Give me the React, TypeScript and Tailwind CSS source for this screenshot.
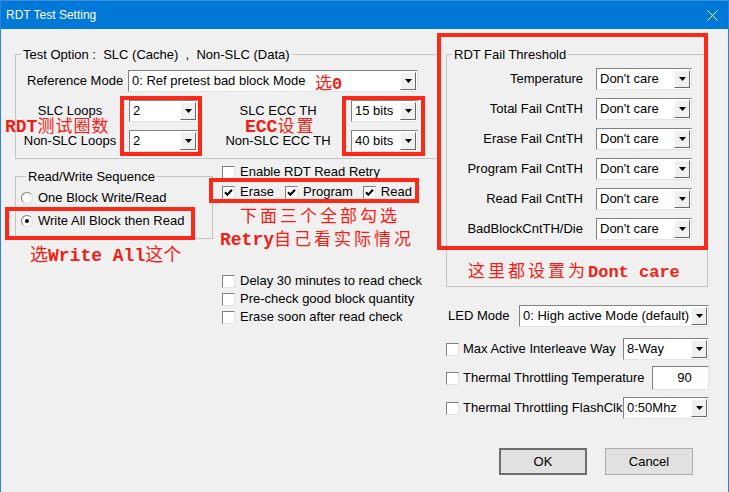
import React from "react";

const red = "text-[#f41c14]";
const cjk = "font-['Noto_Sans_CJK_SC',sans-serif]";
const mono = "font-['Liberation_Mono','Noto_Sans_CJK_SC',monospace] font-bold";

function Arrow() {
  return (
    <svg width="7" height="4" viewBox="0 0 7 4">
      <path d="M0 0h7L3.5 4z" fill="#000" />
    </svg>
  );
}

function Combo({ value, className }: { value: string; className: string }) {
  return (
    <div
      className={`flex h-[22px] shrink-0 border border-t-[#828282] border-l-[#828282] border-b-[#e3e3e3] border-r-[#e3e3e3] bg-white ${className}`}
    >
      <span className="flex-1 overflow-hidden whitespace-nowrap pl-[3px] leading-[20px]">
        {value}
      </span>
      <span className="my-[1px] mr-[1px] flex w-[16px] items-center justify-center border border-t-white border-l-white border-b-[#696969] border-r-[#696969] bg-[#f0f0f0]">
        <Arrow />
      </span>
    </div>
  );
}

function Check({ checked = false }: { checked?: boolean }) {
  return (
    <span className="flex h-[13px] w-[13px] shrink-0 items-center justify-center border border-t-[#808080] border-l-[#808080] border-b-[#e3e3e3] border-r-[#e3e3e3] bg-white">
      {checked && (
        <svg width="9" height="9" viewBox="0 0 9 9">
          <path d="M1 4.3l2.3 2.4L8 1.8" stroke="#000" strokeWidth="2" fill="none" />
        </svg>
      )}
    </span>
  );
}

function Radio({ checked = false }: { checked?: boolean }) {
  return (
    <span className="flex h-[12px] w-[12px] shrink-0 items-center justify-center rounded-full border border-t-[#808080] border-l-[#808080] border-b-[#dcdcdc] border-r-[#dcdcdc] bg-white">
      {checked && <span className="h-[4px] w-[4px] rounded-full bg-black" />}
    </span>
  );
}

const thresholds = [
  "Temperature",
  "Total Fail CntTH",
  "Erase Fail CntTH",
  "Program Fail CntTH",
  "Read Fail CntTH",
  "BadBlockCntTH/Die",
];

export default function App() {
  return (
    <div className="relative h-[492px] w-[729px] overflow-hidden border-x border-[#2a84d8] bg-[#f0f0f0] font-['Liberation_Sans',Arial,sans-serif] text-[13px] text-black">
      {/* title bar */}
      <div className="flex h-[29px] items-center justify-between border-t border-[#3c8fdc] bg-[#0078d7] pl-[5px] pr-[10px] text-[12px] text-white">
        <span>RDT Test Setting</span>
        <svg width="11" height="11" viewBox="0 0 11 11">
          <path d="M0.5 0.5l10 10M10.5 0.5l-10 10" stroke="#fff" strokeWidth="1" />
        </svg>
      </div>

      <div className="flex gap-[5px] pl-[14px] pt-[18px]">
        {/* left */}
        <div className="flex w-[426px] flex-col">
          <fieldset className="border border-[#c4c4c4] pb-[6px]">
            <legend className="ml-[5px] px-[2px] leading-[15px]">
              Test Option :&nbsp; SLC (Cache)&nbsp; ,&nbsp; Non-SLC (Data)
            </legend>
            <div className="mt-[8px] flex items-center">
              <span className="w-[112px] pl-[11px]">Reference Mode</span>
              <Combo value="0: Ref pretest bad block Mode" className="w-[290px]" />
            </div>
            <div className="mt-[8px] flex items-center">
              <span className="w-[108px] text-center">SLC Loops</span>
              <Combo value="2" className="ml-[5px] w-[69px]" />
              <span className="ml-[7px] w-[146px] text-center">SLC ECC TH</span>
              <Combo value="15 bits" className="w-[67px]" />
            </div>
            <div className="mt-[8px] flex items-center">
              <span className="w-[108px] text-center">Non-SLC Loops</span>
              <Combo value="2" className="ml-[5px] w-[69px]" />
              <span className="ml-[7px] w-[146px] text-center">Non-SLC ECC TH</span>
              <Combo value="40 bits" className="w-[67px]" />
            </div>
          </fieldset>

          <div className="flex items-start">
            <fieldset className="mt-[10px] w-[198px] border border-[#c4c4c4] pb-[8px] pl-[5px]">
              <legend className="ml-[5px] px-[2px] leading-[15px]">Read/Write Sequence</legend>
              <label className="mt-[5px] flex h-[18px] items-center gap-[5px]">
                <Radio />
                One Block Write/Read
              </label>
              <label className="mt-[5px] flex h-[18px] items-center gap-[5px]">
                <Radio checked />
                Write All Block then Read
              </label>
            </fieldset>

            <div className="ml-[9px] mt-[4px] flex flex-col">
              <label className="flex h-[18px] items-center gap-[5px]">
                <Check />
                Enable RDT Read Retry
              </label>
              <div className="mt-[2px] flex h-[18px] items-center">
                <Check checked />
                <span className="ml-[5px]">Erase</span>
                <span className="ml-[11px]">
                  <Check checked />
                </span>
                <span className="ml-[5px]">Program</span>
                <span className="ml-[10px]">
                  <Check checked />
                </span>
                <span className="ml-[5px]">Read</span>
              </div>
              <div className="mt-[71px] flex flex-col">
                {[
                  "Delay 30 minutes to read check",
                  "Pre-check good block quantity",
                  "Erase soon after read check",
                ].map((t) => (
                  <label key={t} className="flex h-[18px] items-center gap-[5px]">
                    <Check />
                    {t}
                  </label>
                ))}
              </div>
            </div>
          </div>
        </div>

        {/* right */}
        <div className="flex w-[263px] flex-col">
          <fieldset className="mr-[1px] border border-[#c4c4c4] pb-[46px]">
            <legend className="ml-[5px] px-[2px] leading-[15px]">RDT Fail Threshold</legend>
            <div className="mt-[6px] flex flex-col gap-[8px]">
              {thresholds.map((t) => (
                <div key={t} className="flex items-center">
                  <span className="w-[136px] whitespace-nowrap text-right">{t}</span>
                  <Combo value="Don't care" className="ml-[13px] w-[96px]" />
                </div>
              ))}
            </div>
          </fieldset>

          <div className="mt-[18px] flex items-center">
            <span className="pl-[2px]">LED Mode</span>
            <Combo value="0: High active Mode (default)" className="ml-auto w-[190px]" />
          </div>
          <div className="mt-[11px] flex items-center">
            <Check />
            <span className="ml-[4px]">Max Active Interleave Way</span>
            <Combo value="8-Way" className="ml-auto w-[86px]" />
          </div>
          <div className="mt-[6px] flex items-center">
            <Check />
            <span className="ml-[4px]">Thermal Throttling Temperature</span>
            <span className="ml-auto flex h-[24px] w-[57px] items-center justify-center border border-t-[#828282] border-l-[#828282] border-b-[#e3e3e3] border-r-[#e3e3e3] bg-white pl-[8px]">
              90
            </span>
          </div>
          <div className="mt-[7px] flex items-center">
            <Check />
            <span className="ml-[4px]">Thermal Throttling FlashClk</span>
            <Combo value="0:50Mhz" className="ml-auto w-[86px]" />
          </div>

          <div className="mt-[29px] flex justify-end gap-[18px] pr-[16px]">
            <button className="h-[27px] w-[88px] border-2 border-[#6e6e6e] bg-[#e1e1e1]">OK</button>
            <button className="h-[27px] w-[88px] border border-[#adadad] bg-[#e1e1e1]">Cancel</button>
          </div>
        </div>
      </div>

      {/* annotations drawn over the dialog */}
      <div className="absolute left-[119px] top-[96px] h-[60px] w-[82px] border-[4px] border-[#fb2a18]" />
      <div className="absolute left-[341px] top-[96px] h-[60px] w-[83px] border-[4px] border-[#fb2a18]" />
      <div className="absolute left-[436px] top-[33px] h-[217px] w-[271px] border-[4px] border-[#fb2a18]" />
      <div className="absolute left-[4px] top-[207px] h-[33px] w-[190px] border-[4px] border-[#fb2a18]" />
      <div className="absolute left-[208px] top-[178px] h-[25px] w-[210px] border-[4px] border-[#fb2a18]" />

      <span className={`absolute left-[314px] top-[73px] text-[17px] leading-[17px] ${red} ${cjk}`}>
        选<span className={mono}>0</span>
      </span>
      <span className={`absolute left-[4px] top-[116px] text-[17px] leading-[17px] ${red} ${cjk}`}>
        <span className={`${mono} text-[18px]`}>RDT</span>
        <span className="tracking-[1px]">测试圈数</span>
      </span>
      <span className={`absolute left-[244px] top-[116px] text-[17px] leading-[17px] ${red} ${cjk}`}>
        <span className={`${mono} text-[18px]`}>ECC</span>
        <span className="tracking-[2px]">设置</span>
      </span>
      <span className={`absolute left-[239px] top-[206px] text-[17px] leading-[17px] tracking-[3px] ${red} ${cjk}`}>
        下面三个全部勾选
      </span>
      <span className={`absolute left-[219px] top-[229px] text-[17px] leading-[17px] ${red} ${cjk}`}>
        <span className={`${mono} text-[18px]`}>Retry</span>
        <span className="tracking-[3px]">自己看实际情况</span>
      </span>
      <span className={`absolute left-[29px] top-[244px] text-[18px] leading-[18px] ${red} ${cjk}`}>
        选<span className={mono}>Write All</span>这个
      </span>
      <span className={`absolute left-[467px] top-[261px] text-[17px] leading-[17px] ${red} ${cjk}`}>
        <span className="tracking-[3px]">这里都设置为</span>
        <span className={mono}>Dont care</span>
      </span>
    </div>
  );
}
